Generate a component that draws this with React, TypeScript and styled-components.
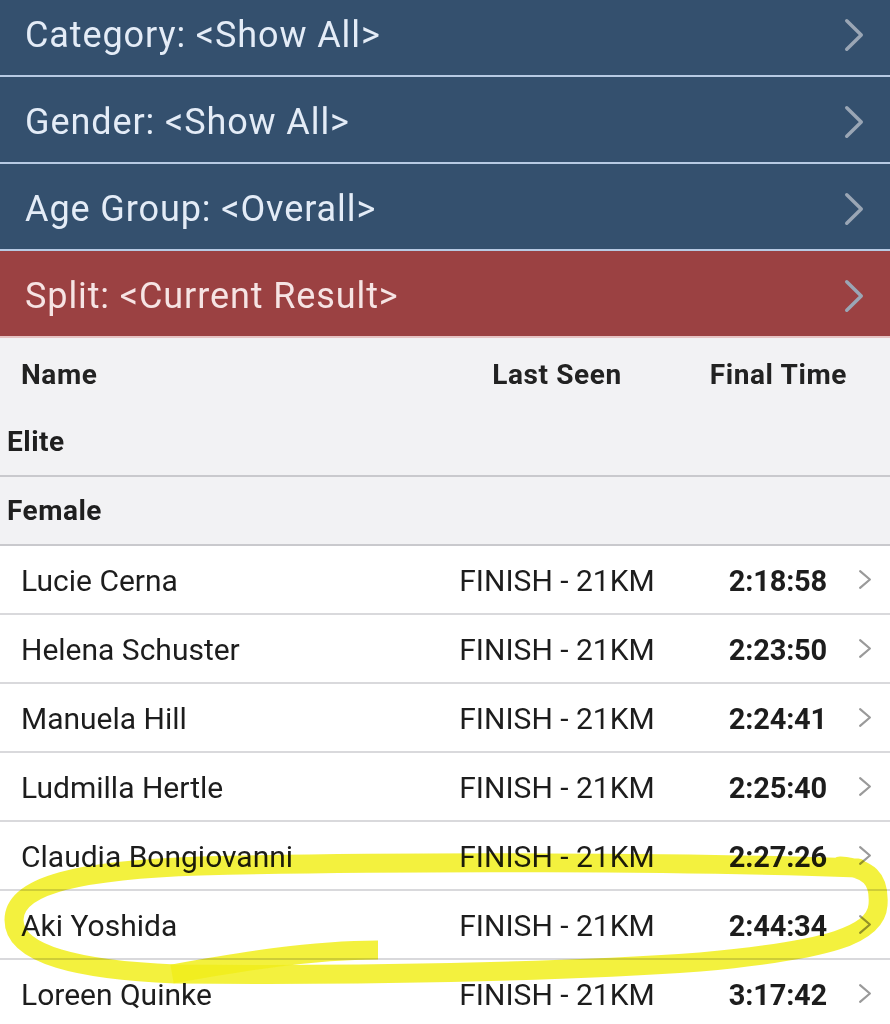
import styled, { createGlobalStyle } from 'styled-components';

const GlobalStyle = createGlobalStyle`
  html, body {
    margin: 0;
    padding: 0;
    background: #ffffff;
  }
  body {
    font-family: Roboto, 'Liberation Sans', sans-serif;
  }
`;

const Page = styled.div`
  position: relative;
  width: 890px;
  height: 1024px;
  overflow: hidden;
`;

// the list is scrolled a little, so the first bar is cut at the top
const Scroller = styled.div`
  margin-top: -10px;
`;

const FilterBar = styled.div<{ $tone: 'blue' | 'red' }>`
  display: flex;
  align-items: center;
  justify-content: space-between;
  height: 87px;
  padding: 4px 26px 0 25px;
  box-sizing: border-box;
  background: ${(p) => (p.$tone === 'red' ? '#9b4142' : '#34506e')};
  border-bottom: 2px solid ${(p) => (p.$tone === 'red' ? '#e6c3c4' : '#b7cae3')};
  color: ${(p) => (p.$tone === 'red' ? '#f6e4e4' : '#e4ecf7')};
  font-size: 36px;
  letter-spacing: 0.9px;
`;

const HeadRow = styled.div`
  display: grid;
  grid-template-columns: 1fr 200px 190px;
  align-items: center;
  height: 68px;
  padding: 2px 43px 0 21px;
  background: #f2f2f4;
  color: #222;
  font-size: 28px;
  font-weight: 700;
  letter-spacing: 0.6px;
`;

const HeadCell = styled.div<{ $align?: 'left' | 'center' | 'right' }>`
  text-align: ${(p) => p.$align ?? 'left'};
`;

const GroupRow = styled.div`
  display: flex;
  align-items: center;
  height: 67px;
  padding-left: 7px;
  background: #f2f2f4;
  border-bottom: 2px solid #c9c9cd;
  color: #1f1f1f;
  font-size: 28px;
  font-weight: 700;
  letter-spacing: 0.5px;
`;

const ResultRow = styled.div`
  display: grid;
  grid-template-columns: 1fr 200px 170px 63px;
  align-items: center;
  height: 67px;
  padding-left: 21px;
  background: #fff;
  border-bottom: 2px solid #d9d9dc;
  color: #1d1d1d;
  font-size: 30px;
`;

const Name = styled.div`
  padding-top: 2px;
`;

const LastSeen = styled.div`
  text-align: center;
  padding-top: 2px;
`;

const Time = styled.div`
  text-align: right;
  font-weight: 700;
  font-size: 29px;
  letter-spacing: -0.2px;
  padding-top: 2px;
`;

const ChevronCell = styled.div`
  display: flex;
  align-items: center;
  padding-left: 31px;
`;

const Highlight = styled.svg`
  position: absolute;
  left: 0;
  top: 0;
  pointer-events: none;
  mix-blend-mode: multiply;
`;

function Chevron({ w, h, color, stroke }: { w: number; h: number; color: string; stroke: number }) {
  return (
    <svg width={w} height={h} viewBox={`0 0 ${w} ${h}`}>
      <path
        d={`M ${stroke / 2 + 1} ${stroke / 2 + 1} L ${w - stroke / 2 - 1} ${h / 2} L ${stroke / 2 + 1} ${h - stroke / 2 - 1}`}
        fill="none"
        stroke={color}
        strokeWidth={stroke}
        strokeLinecap="round"
        strokeLinejoin="round"
      />
    </svg>
  );
}

const filters = [
  { label: 'Category: <Show All>', tone: 'blue' as const },
  { label: 'Gender: <Show All>', tone: 'blue' as const },
  { label: 'Age Group: <Overall>', tone: 'blue' as const },
  { label: 'Split: <Current Result>', tone: 'red' as const },
];

const results = [
  { name: 'Lucie Cerna', time: '2:18:58' },
  { name: 'Helena Schuster', time: '2:23:50' },
  { name: 'Manuela Hill', time: '2:24:41' },
  { name: 'Ludmilla Hertle', time: '2:25:40' },
  { name: 'Claudia Bongiovanni', time: '2:27:26' },
  { name: 'Aki Yoshida', time: '2:44:34' },
  { name: 'Loreen Quinke', time: '3:17:42' },
];

export default function App() {
  return (
    <Page>
      <GlobalStyle />
      <Scroller>
        {filters.map((f) => (
          <FilterBar key={f.label} $tone={f.tone}>
            <span>{f.label}</span>
            <Chevron w={20} h={34} color="#9aa6b5" stroke={3.5} />
          </FilterBar>
        ))}
        <HeadRow>
          <HeadCell>Name</HeadCell>
          <HeadCell $align="center">Last Seen</HeadCell>
          <HeadCell $align="right">Final Time</HeadCell>
        </HeadRow>
        <GroupRow>Elite</GroupRow>
        <GroupRow>Female</GroupRow>
        {results.map((r) => (
          <ResultRow key={r.name}>
            <Name>{r.name}</Name>
            <LastSeen>FINISH - 21KM</LastSeen>
            <Time>{r.time}</Time>
            <ChevronCell>
              <Chevron w={14} h={21} color="#9a9a9a" stroke={2.2} />
            </ChevronCell>
          </ResultRow>
        ))}
      </Scroller>
      <Highlight width={890} height={1024} viewBox="0 0 890 1024">
        <g fill="none" stroke="#f1ee1c" strokeOpacity={0.85} strokeWidth={19} strokeLinecap="round">
          <path d="M 858 868 C 700 862, 400 861, 200 866 C 80 870, 14 885, 14 920 C 14 955, 80 970, 175 974 C 350 976, 560 972, 700 962 C 830 950, 876 935, 878 905 C 880 878, 868 868, 840 866" />
          <path d="M 172 974 C 240 962, 310 950, 378 950" strokeLinecap="butt" />
        </g>
      </Highlight>
    </Page>
  );
}
